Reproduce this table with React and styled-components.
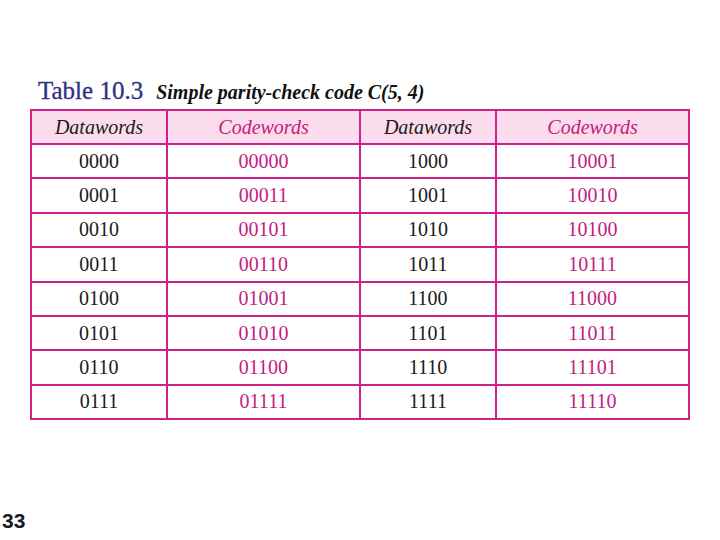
import styled, { createGlobalStyle } from 'styled-components';

const GlobalStyle = createGlobalStyle`
	html, body {
		margin: 0;
		padding: 0;
		background: #ffffff;
	}
`;

const rows = [
	['0000', '00000', '1000', '10001'],
	['0001', '00011', '1001', '10010'],
	['0010', '00101', '1010', '10100'],
	['0011', '00110', '1011', '10111'],
	['0100', '01001', '1100', '11000'],
	['0101', '01010', '1101', '11011'],
	['0110', '01100', '1110', '11101'],
	['0111', '01111', '1111', '11110'],
];

function App(){
	return(
		<>
			<GlobalStyle/>
			<Slide>
				<Caption>
					<TableNo>Table 10.3</TableNo>
					<CaptionText>Simple parity-check code C(5, 4)</CaptionText>
				</Caption>
				<CodeTable>
					<colgroup>
						<col style={{width: 136}}/>
						<col style={{width: 193}}/>
						<col style={{width: 136}}/>
						<col style={{width: 193}}/>
					</colgroup>
					<thead>
						<tr>
							<Head>Datawords</Head>
							<Head $code>Codewords</Head>
							<Head>Datawords</Head>
							<Head $code>Codewords</Head>
						</tr>
					</thead>
					<tbody>
						{rows.map((r) => (
							<tr key={r[0]}>
								<Cell>{r[0]}</Cell>
								<Cell $code>{r[1]}</Cell>
								<Cell>{r[2]}</Cell>
								<Cell $code>{r[3]}</Cell>
							</tr>
						))}
					</tbody>
				</CodeTable>
				<PageNo>33</PageNo>
			</Slide>
		</>
	)
}

const Slide = styled.div`
	width: 720px;
	height: 540px;
	box-sizing: border-box;
	padding: 77px 0 0 30px;
	position: relative;
	overflow: hidden;
`

const Caption = styled.div`
	display: flex;
	align-items: baseline;
	gap: 13px;
	padding-left: 8px;
	height: 31px;
	margin-bottom: 1px;
`

const TableNo = styled.span`
	font-family: 'Liberation Serif', serif;
	font-size: 25px;
	-webkit-text-stroke: 0.3px #2e3184;
	color: #2e3184;
`

const CaptionText = styled.span`
	font-family: 'Liberation Serif', serif;
	font-size: 20px;
	font-weight: bold;
	font-style: italic;
	color: #111;
`

const CodeTable = styled.table`
	border-collapse: collapse;
	table-layout: fixed;
	width: 658px;
	border: 2px solid #b5327f;
`

const Head = styled.th`
	height: 32px;
	padding: 0;
	background: #fadcec;
	border: 2px solid #d2208a;
	font-family: 'Liberation Serif', serif;
	font-size: 20px;
	font-style: italic;
	font-weight: normal;
	color: ${p => p.$code ? '#c4207f' : '#1a1a1a'};
	text-align: center;
`

const Cell = styled.td`
	height: 32.4px;
	padding: 0;
	border: 2px solid #d2208a;
	font-family: 'Liberation Serif', serif;
	font-size: 20px;
	color: ${p => p.$code ? '#c4207f' : '#1a1a1a'};
	text-align: center;
`

const PageNo = styled.div`
	position: absolute;
	left: 2px;
	bottom: 7px;
	font-family: 'Liberation Sans', Arial, sans-serif;
	font-size: 21px;
	font-weight: bold;
	color: #1a1a1a;
`

export default App;
